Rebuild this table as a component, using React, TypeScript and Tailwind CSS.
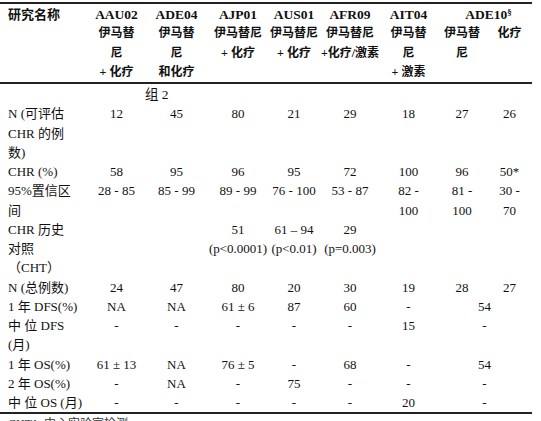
const font = "font-['Liberation_Serif','Noto_Sans_CJK_SC',serif]";

type Row = { label: string[]; cells: (string | { text: string; span: number })[] };

const rows: Row[] = [
  { label: ["N (可评估", "CHR 的例", "数)"], cells: ["12", "45", "80", "21", "29", "18", "27", "26"] },
  { label: ["CHR (%)"], cells: ["58", "95", "96", "95", "72", "100", "96", "50*"] },
  { label: ["95%置信区", "间"], cells: ["28 - 85", "85 - 99", "89 - 99", "76 - 100", "53 - 87", "82 -\n100", "81 -\n100", "30 -\n70"] },
  { label: ["CHR 历史", "对照", "（CHT）"], cells: ["", "", "51\n(p<0.0001)", "61 – 94\n(p<0.01)", "29\n(p=0.003)", "", "", ""] },
  { label: ["N (总例数)"], cells: ["24", "47", "80", "20", "30", "19", "28", "27"] },
  { label: ["1 年 DFS(%)"], cells: ["NA", "NA", "61 ± 6", "87", "60", "-", { text: "54", span: 2 }] },
  { label: ["中 位 DFS", "(月)"], cells: ["-", "-", "-", "-", "-", "15", { text: "-", span: 2 }] },
  { label: ["1 年 OS(%)"], cells: ["61 ± 13", "NA", "76 ± 5", "-", "68", "-", { text: "54", span: 2 }] },
  { label: ["2 年 OS(%)"], cells: ["-", "NA", "-", "75", "-", "-", { text: "-", span: 2 }] },
  { label: ["中 位 OS (月)"], cells: ["-", "-", "-", "-", "-", "20", { text: "-", span: 2 }] },
];

const headers = [
  ["AAU02", "伊马替", "尼", "+ 化疗"],
  ["ADE04", "伊马替", "尼", "和化疗"],
  ["AJP01", "伊马替尼", "+ 化疗"],
  ["AUS01", "伊马替尼", "+ 化疗"],
  ["AFR09", "伊马替尼", "+化疗/激素"],
  ["AIT04", "伊马替", "尼", "+ 激素"],
];

const Lines = ({ text }: { text: string }) => (
  <>
    {text.split("\n").map((t, i) => (
      <div key={i}>{t || "\u00a0"}</div>
    ))}
  </>
);

export default function App() {
  return (
    <div className={`${font} w-[541px] h-[421px] overflow-hidden bg-white text-[13px] leading-[19.25px] text-[#111]`}>
      <div className="-mt-[17px] h-[19px] pl-[150px] text-[13px] text-[#999]">表 3 伊马替尼治疗 Ph+ ALL 患者的临床研究结果汇总</div>
      <table className="w-[532px] table-fixed border-collapse">
        <colgroup>
          <col className="w-[88px]" />
          <col className="w-[57px]" />
          <col className="w-[63px]" />
          <col className="w-[60px]" />
          <col className="w-[52px]" />
          <col className="w-[60px]" />
          <col className="w-[57px]" />
          <col className="w-[50px]" />
          <col className="w-[45px]" />
        </colgroup>
        <thead>
          <tr className="border-t-2 border-b-2 border-[#222] align-top">
            <th className="pl-2 pt-[1px] text-left font-bold">研究名称</th>
            {headers.map((h, i) => (
              <th key={i} className="pt-[1px] text-center font-bold">
                <div className="text-[13.5px]">{h[0]}</div>
                {h.slice(1).map((t, j) => (
                  <div key={j} className="text-[12px]">{t}</div>
                ))}
              </th>
            ))}
            <th colSpan={2} className="pt-[1px] text-center font-bold">
              <div className="pl-2 text-[13.5px]">
                ADE10<sup className="text-[9px]">§</sup>
              </div>
              <div className="flex text-[12px]">
                <div className="w-[50px] text-center">
                  <div>伊马替</div>
                  <div>尼</div>
                </div>
                <div className="flex-1 text-center">化疗</div>
              </div>
            </th>
          </tr>
        </thead>
        <tbody>
          <tr className="h-[21px] align-top">
            <td />
            <td />
            <td className="pt-[1px] text-left text-[13.5px]">组 2</td>
            <td colSpan={6} />
          </tr>
          {rows.map((r, i) => (
            <tr key={i} className={`align-top ${i === rows.length - 1 ? "border-b-2 border-[#222]" : ""}`}>
              <td className="pl-2">
                {r.label.map((l, j) => (
                  <div key={j}>{l}</div>
                ))}
              </td>
              {r.cells.map((c, j) =>
                typeof c === "string" ? (
                  <td key={j} className="text-center">
                    <Lines text={c} />
                  </td>
                ) : (
                  <td key={j} colSpan={c.span} className="text-center">
                    <Lines text={c.text} />
                  </td>
                )
              )}
            </tr>
          ))}
        </tbody>
      </table>
      <div className="pl-2 pt-[1px] text-[12px] text-[#333]">
        CHT：中心实验室检测
      </div>
    </div>
  );
}
